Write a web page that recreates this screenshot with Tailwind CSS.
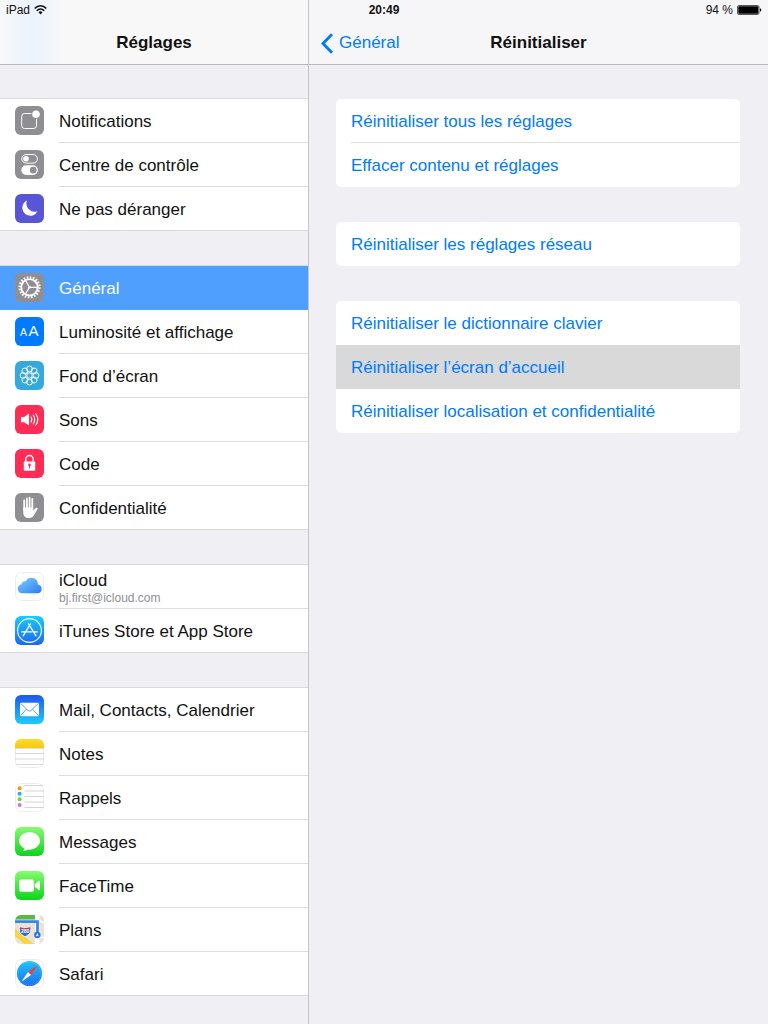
<!DOCTYPE html>
<html lang="fr">
<head>
    <meta charset="UTF-8">
    <meta name="viewport" content="width=device-width, initial-scale=1.0">
    <title>Réglages</title>
    <script src="https://cdn.jsdelivr.net/npm/@tailwindcss/browser@4"></script>
</head>
<body class="relative flex min-h-screen bg-[#efeff4] font-['Liberation_Sans',Arial,sans-serif] text-[17px] leading-5 text-[#111]">

    <!-- Status bar, over both columns -->
    <div class="absolute inset-x-0 top-0 grid h-5 grid-cols-3 items-center px-1.5 text-[12px] leading-4">
        <div class="flex items-center gap-1">
            <span>iPad</span>
            <svg class="h-[10px] w-[13px]" viewBox="0 0 13 10" fill="none" stroke="#111" stroke-width="1.5">
                <path d="M.7 3.600C4-.2 9-.2 12.300 3.600"/>
                <path d="M2.700 5.700c2.200-2.400 5.400-2.400 7.600 0"/>
                <path d="M4.500 7.200c1.200-1.200 2.800-1.200 4 0L6.500 9.500z" fill="#111" stroke="none"/>
            </svg>
        </div>
        <span class="text-center font-bold">20:49</span>
        <div class="flex items-center justify-end gap-1">
            <span>94 %</span>
            <svg class="h-[10px] w-[25px]" viewBox="0 0 25 10">
                <rect x=".5" y=".5" width="21.500" height="9" rx="1.500" fill="none" stroke="#111" stroke-width=".7"/>
                <rect x="1.300" y="1.300" width="20" height="7.400" rx=".8"/>
                <path d="M23 3.300c1.800.5 1.800 2.900 0 3.400z"/>
            </svg>
        </div>
    </div>

    <!-- Sidebar -->
    <aside class="w-[308px] shrink-0">
        <header class="h-[65px] border-b border-[#b8b8bd] bg-[#f8f8f8] bg-linear-to-r from-[#f8f8f8] via-[#ebf3fd] via-10% to-[#f8f8f8] to-22% pt-[33px]">
            <h1 class="text-center font-bold">Réglages</h1>
        </header>

        <nav class="flex flex-col gap-[34px] pt-[33px]">
            <ul class="border-t border-[#dadade] bg-white">
                <li class="h-11">
                    <a href="#" class="flex h-full items-center gap-[15px] pl-[15px]">
                        <svg class="mb-px size-[29px] shrink-0 rounded-md" viewBox="0 0 29 29">
                            <rect width="29" height="29" fill="#8e8e93"/>
                            <rect x="6.700" y="7.500" width="14.800" height="15" rx="2.800" fill="none" stroke="#fff" stroke-width="1"/>
                            <circle cx="21" cy="8.300" r="4.600" fill="#8e8e93"/>
                            <circle cx="21" cy="8.300" r="3.800" fill="#fff"/>
                        </svg>
                        <span class="flex h-full flex-1 items-center border-b border-[#dcdcdf] pt-0.5">Notifications</span>
                    </a>
                </li>
                <li class="h-11">
                    <a href="#" class="flex h-full items-center gap-[15px] pl-[15px]">
                        <svg class="mb-px size-[29px] shrink-0 rounded-md" viewBox="0 0 29 29">
                            <rect width="29" height="29" fill="#8e8e93"/>
                            <rect x="6.800" y="4.500" width="15.600" height="8.600" rx="4.300" fill="none" stroke="#fff" stroke-width="1"/>
                            <circle cx="11" cy="8.800" r="2.800" fill="#fff"/>
                            <rect x="6.300" y="15.300" width="16.600" height="9.600" rx="4.800" fill="#fff"/>
                            <circle cx="18.200" cy="20.100" r="3.400" fill="#8e8e93"/>
                        </svg>
                        <span class="flex h-full flex-1 items-center border-b border-[#dcdcdf] pt-0.5">Centre de contrôle</span>
                    </a>
                </li>
                <li class="h-11 border-b border-[#dadade]">
                    <a href="#" class="flex h-full items-center gap-[15px] pl-[15px]">
                        <svg class="size-[29px] shrink-0 rounded-md" viewBox="0 0 29 29">
                            <rect width="29" height="29" fill="#5856d6"/>
                            <path d="M12 6.500A8 8 0 1 0 22.500 17.300A8.300 8.300 0 0 1 12 6.500z" fill="#fff"/>
                        </svg>
                        <span class="pt-0.5">Ne pas déranger</span>
                    </a>
                </li>
            </ul>

            <ul class="border-t border-[#dadade] bg-white">
                <li class="h-11 bg-[#4e9fff] text-white">
                    <a href="#" aria-current="page" class="flex h-full items-center gap-[15px] pl-[15px]">
                        <svg class="mb-px size-[29px] shrink-0 rounded-md" viewBox="0 0 29 29" fill="none" stroke="#fff">
                            <rect width="29" height="29" fill="#8e8e93" stroke="none"/>
                            <circle cx="14.500" cy="14.300" r="10" stroke-width="2.200" stroke-dasharray="1.571 1.571"/>
                            <circle cx="14.500" cy="14.300" r="8.200" stroke-width="1.800"/>
                            <path d="M14.500 14.300h7.500M14.500 14.300l-3.800-6.500M14.500 14.300l-3.800 6.500" stroke-width="1.200"/>
                            <circle cx="14.500" cy="14.300" r="1.300" fill="#fff" stroke="none"/>
                        </svg>
                        <span class="pt-0.5">Général</span>
                    </a>
                </li>
                <li class="h-11">
                    <a href="#" class="flex h-full items-center gap-[15px] pl-[15px]">
                        <svg class="mb-px size-[29px] shrink-0 rounded-md" viewBox="0 0 29 29" fill="#fff">
                            <rect width="29" height="29" fill="#007aff"/>
                            <text x="5" y="18.700" font-size="10.500">A</text>
                            <text x="13.500" y="18.700" font-size="15">A</text>
                        </svg>
                        <span class="flex h-full flex-1 items-center border-b border-[#dcdcdf] pt-0.5">Luminosité et affichage</span>
                    </a>
                </li>
                <li class="h-11">
                    <a href="#" class="flex h-full items-center gap-[15px] pl-[15px]">
                        <svg class="mb-px size-[29px] shrink-0 rounded-md" viewBox="0 0 29 29" fill="none" stroke="#fff" stroke-width="1">
                            <rect width="29" height="29" fill="#34aadc" stroke="none"/>
                            <circle cx="14.500" cy="14.500" r="2.700"/>
                            <circle cx="14.500" cy="8" r="2.900"/>
                            <circle cx="19.100" cy="9.900" r="2.900"/>
                            <circle cx="21" cy="14.500" r="2.900"/>
                            <circle cx="19.100" cy="19.100" r="2.900"/>
                            <circle cx="14.500" cy="21" r="2.900"/>
                            <circle cx="9.900" cy="19.100" r="2.900"/>
                            <circle cx="8" cy="14.500" r="2.900"/>
                            <circle cx="9.900" cy="9.900" r="2.900"/>
                        </svg>
                        <span class="flex h-full flex-1 items-center border-b border-[#dcdcdf] pt-0.5">Fond d’écran</span>
                    </a>
                </li>
                <li class="h-11">
                    <a href="#" class="flex h-full items-center gap-[15px] pl-[15px]">
                        <svg class="mb-px size-[29px] shrink-0 rounded-md" viewBox="0 0 29 29" fill="none" stroke="#fff" stroke-width="1.100" stroke-linecap="round">
                            <rect width="29" height="29" fill="#ff2d55" stroke="none"/>
                            <path d="M6 12h3.200L14 8.500v12L9.200 17.200H6z" fill="#fff" stroke="none"/>
                            <path d="M16 12q1.700 2.500 0 5M18.300 10.300q2.900 4.200 0 8.400M20.700 8.700q4.200 5.800 0 11.600"/>
                        </svg>
                        <span class="flex h-full flex-1 items-center border-b border-[#dcdcdf] pt-0.5">Sons</span>
                    </a>
                </li>
                <li class="h-11">
                    <a href="#" class="flex h-full items-center gap-[15px] pl-[15px]">
                        <svg class="mb-px size-[29px] shrink-0 rounded-md" viewBox="0 0 29 29">
                            <rect width="29" height="29" fill="#ff2d55"/>
                            <path d="M10.700 13v-2.600a3.800 3.800 0 0 1 7.600 0V13" fill="none" stroke="#fff" stroke-width="1.500"/>
                            <rect x="8.800" y="12.500" width="11.400" height="9.300" rx=".8" fill="#fff"/>
                            <circle cx="14.500" cy="15.900" r="1.300" fill="#ff2d55"/>
                            <path d="M14 16h1v3.400h-1z" fill="#ff2d55"/>
                        </svg>
                        <span class="flex h-full flex-1 items-center border-b border-[#dcdcdf] pt-0.5">Code</span>
                    </a>
                </li>
                <li class="h-11 border-b border-[#dadade]">
                    <a href="#" class="flex h-full items-center gap-[15px] pl-[15px]">
                        <svg class="size-[29px] shrink-0 rounded-md" viewBox="0 0 29 29" fill="none" stroke="#fff" stroke-width="1.800" stroke-linecap="round">
                            <rect width="29" height="29" fill="#8e8e93" stroke="none"/>
                            <path d="M9.200 7.500V17M11.900 5.500V16M14.600 4.700V16M17.300 6V16"/>
                            <path d="M8.300 14.500h9.900v3l2.400-2.300c.9-.7 2.600-.3 2 .7l-3.700 6.400c-1.200 2-2.300 2.700-4.500 2.700h-1.200c-3 0-4.900-2.500-4.900-5.500z" fill="#fff" stroke="none"/>
                        </svg>
                        <span class="pt-0.5">Confidentialité</span>
                    </a>
                </li>
            </ul>

            <ul class="border-t border-[#dadade] bg-white">
                <li class="h-11">
                    <a href="#" class="flex h-full items-center gap-[15px] pl-[15px]">
                        <svg class="mb-px size-[29px] shrink-0 rounded-md" viewBox="0 0 29 29">
                            <defs>
                                <linearGradient id="cloud" x1="0" y1="0" x2="1" y2="1">
                                    <stop offset="0" stop-color="#7bd0fb"/>
                                    <stop offset="1" stop-color="#2a7bf5"/>
                                </linearGradient>
                            </defs>
                            <rect x=".5" y=".5" width="28" height="28" rx="6" fill="#fff" stroke="#ececee"/>
                            <path d="M7.400 21.300a4.600 4.600 0 0 1-.9-9.100 3.500 3.500 0 0 1 4.200-2.900 6.500 6.500 0 0 1 12.200 3.100 4.500 4.500 0 0 1-.3 8.900z" fill="url(#cloud)"/>
                        </svg>
                        <span class="flex h-full flex-1 flex-col justify-center border-b border-[#dcdcdf] pt-1">
                            <span class="leading-[18px]">iCloud</span>
                            <span class="text-[12px] leading-4 text-[#8e8e93]">bj.first@icloud.com</span>
                        </span>
                    </a>
                </li>
                <li class="h-11 border-b border-[#dadade]">
                    <a href="#" class="flex h-full items-center gap-[15px] pl-[15px]">
                        <svg class="size-[29px] shrink-0 rounded-md" viewBox="0 0 29 29" fill="none" stroke="#fff">
                            <defs>
                                <linearGradient id="store" x2="0" y2="1">
                                    <stop offset="0" stop-color="#1acdfb"/>
                                    <stop offset="1" stop-color="#1c66f0"/>
                                </linearGradient>
                            </defs>
                            <rect width="29" height="29" fill="url(#store)" stroke="none"/>
                            <circle cx="14.500" cy="14.500" r="11.900" stroke-width="1.100"/>
                            <path d="M13.500 7.800L21 19.800M15.300 8L8.200 19.800M6.800 15.900h10M19.300 15.900h2.900" stroke-width="1.300" stroke-linecap="round"/>
                        </svg>
                        <span class="pt-0.5">iTunes Store et App Store</span>
                    </a>
                </li>
            </ul>

            <ul class="border-t border-[#dadade] bg-white">
                <li class="h-11">
                    <a href="#" class="flex h-full items-center gap-[15px] pl-[15px]">
                        <svg class="mb-px size-[29px] shrink-0 rounded-md" viewBox="0 0 29 29">
                            <defs>
                                <linearGradient id="mail" x2="0" y2="1">
                                    <stop offset="0" stop-color="#1e56ee"/>
                                    <stop offset="1" stop-color="#1bcefb"/>
                                </linearGradient>
                            </defs>
                            <rect width="29" height="29" fill="url(#mail)"/>
                            <rect x="5" y="7.800" width="19" height="13.400" rx="1" fill="#fff"/>
                            <path d="M5.500 8.300l7.600 7.200q1.400 1.200 2.800 0l7.600-7.200M5.500 20.700l5.900-6.500M23.500 20.700l-5.900-6.500" fill="none" stroke="#2e8cf4" stroke-width=".8"/>
                        </svg>
                        <span class="flex h-full flex-1 items-center border-b border-[#dcdcdf] pt-0.5">Mail, Contacts, Calendrier</span>
                    </a>
                </li>
                <li class="h-11">
                    <a href="#" class="flex h-full items-center gap-[15px] pl-[15px]">
                        <svg class="mb-px size-[29px] shrink-0 rounded-md" viewBox="0 0 29 29">
                            <defs>
                                <linearGradient id="notes" x2="0" y2="1">
                                    <stop offset="0" stop-color="#fcdc2c"/>
                                    <stop offset="1" stop-color="#f9c70b"/>
                                </linearGradient>
                            </defs>
                            <rect x=".5" y=".5" width="28" height="28" rx="6" fill="#fff" stroke="#e4e4e6" stroke-width=".8"/>
                            <rect width="29" height="9" fill="url(#notes)"/>
                            <path d="M0 9.400h29M0 14.500h29M0 20h29M0 25.500h29" stroke="#cfcfd2" stroke-width=".8"/>
                        </svg>
                        <span class="flex h-full flex-1 items-center border-b border-[#dcdcdf] pt-0.5">Notes</span>
                    </a>
                </li>
                <li class="h-11">
                    <a href="#" class="flex h-full items-center gap-[15px] pl-[15px]">
                        <svg class="mb-px size-[29px] shrink-0 rounded-md" viewBox="0 0 29 29">
                            <rect x=".5" y=".5" width="28" height="28" rx="6" fill="#fff" stroke="#e8e8ea" stroke-width=".8"/>
                            <path d="M9.500 2.500H28M9.500 8H29M9.500 13.500H29M9.500 19H29M9.500 24.500H29" stroke="#cfcfd2" stroke-width=".9"/>
                            <circle cx="4.600" cy="5.200" r="2" fill="#ff9500"/>
                            <circle cx="4.600" cy="10.700" r="2" fill="#1badf8"/>
                            <circle cx="4.600" cy="16.300" r="2" fill="#63da38"/>
                            <circle cx="4.600" cy="22" r="2" fill="#cc73e1"/>
                        </svg>
                        <span class="flex h-full flex-1 items-center border-b border-[#dcdcdf] pt-0.5">Rappels</span>
                    </a>
                </li>
                <li class="h-11">
                    <a href="#" class="flex h-full items-center gap-[15px] pl-[15px]">
                        <svg class="mb-px size-[29px] shrink-0 rounded-md" viewBox="0 0 29 29">
                            <defs>
                                <linearGradient id="green" x2="0" y2="1">
                                    <stop offset="0" stop-color="#86fb6f"/>
                                    <stop offset="1" stop-color="#0dd41c"/>
                                </linearGradient>
                            </defs>
                            <rect width="29" height="29" fill="url(#green)"/>
                            <ellipse cx="14.500" cy="13.800" rx="10.600" ry="8.900" fill="#fff"/>
                            <path d="M9.300 20.500c.2 1.500-.5 2.700-1.600 3.500 2.200.1 4-.5 5.300-1.800z" fill="#fff"/>
                        </svg>
                        <span class="flex h-full flex-1 items-center border-b border-[#dcdcdf] pt-0.5">Messages</span>
                    </a>
                </li>
                <li class="h-11">
                    <a href="#" class="flex h-full items-center gap-[15px] pl-[15px]">
                        <svg class="mb-px size-[29px] shrink-0 rounded-md" viewBox="0 0 29 29">
                            <rect width="29" height="29" fill="url(#green)"/>
                            <rect x="4.300" y="8.400" width="14.500" height="12.300" rx="1.600" fill="#fff"/>
                            <path d="M19.700 13.300l4-3.300q1.300-.9 1.300.5v8q0 1.400-1.300.5l-4-3.300z" fill="#fff"/>
                        </svg>
                        <span class="flex h-full flex-1 items-center border-b border-[#dcdcdf] pt-0.5">FaceTime</span>
                    </a>
                </li>
                <li class="h-11">
                    <a href="#" class="flex h-full items-center gap-[15px] pl-[15px]">
                        <svg class="mb-px size-[29px] shrink-0 rounded-md" viewBox="0 0 29 29">
                            <rect width="29" height="29" fill="#e9e3d6"/>
                            <path d="M0 0h20v4.500H0z" fill="#58b947"/>
                            <path d="M25 0h4v5z" fill="#f7b9c5"/>
                            <path d="M20 0h4.500v29H20z" fill="#fff"/>
                            <path d="M24 5l5 3M24 22.500h5" stroke="#fff" stroke-width="1.500"/>
                            <path d="M0 14.500L18 29h-7.500L0 20.500z" fill="#fdd835"/>
                            <path d="M0 14.500L18 29M0 20.500L10.500 29" stroke="#f5b82e" stroke-width=".6"/>
                            <path d="M0 6.700h22.500v13" fill="none" stroke="#3a85e8" stroke-width="2.800"/>
                            <circle cx="22.300" cy="20" r="3.200" fill="#2a74dd"/>
                            <path d="M22.300 18l1.500 3.500-1.500-.8-1.500.8z" fill="#fff"/>
                            <path d="M5 12.200q5 1.500 10.200 0 2.600 6-5.100 9.600-7.700-3.600-5.100-9.600z" fill="#2870cf" stroke="#fff" stroke-width=".8"/>
                            <path d="M5 12.200q5 1.500 10.200 0l.4 1.900H4.600z" fill="#dc3b3b"/>
                            <text x="10.100" y="18.400" text-anchor="middle" font-size="5" font-weight="bold" fill="#fff">280</text>
                        </svg>
                        <span class="flex h-full flex-1 items-center border-b border-[#dcdcdf] pt-0.5">Plans</span>
                    </a>
                </li>
                <li class="h-11 border-b border-[#dadade]">
                    <a href="#" class="flex h-full items-center gap-[15px] pl-[15px]">
                        <svg class="size-[29px] shrink-0 rounded-md" viewBox="0 0 29 29">
                            <defs>
                                <linearGradient id="safari" x2="0" y2="1">
                                    <stop offset="0" stop-color="#1bc6fb"/>
                                    <stop offset="1" stop-color="#1d6ff0"/>
                                </linearGradient>
                            </defs>
                            <rect x=".5" y=".5" width="28" height="28" rx="6" fill="#fff" stroke="#e8e8ea" stroke-width=".8"/>
                            <circle cx="14.500" cy="14.500" r="12.600" fill="url(#safari)"/>
                            <circle cx="14.500" cy="14.500" r="11.200" fill="none" stroke="#fff" stroke-opacity=".5" stroke-width="1" stroke-dasharray=".4 1.900"/>
                            <path d="M22.700 6.300L16 16l-3-3z" fill="#fb3b30"/>
                            <path d="M6.300 22.700L13 13l3 3z" fill="#fff"/>
                        </svg>
                        <span class="pt-0.5">Safari</span>
                    </a>
                </li>
            </ul>
        </nav>
    </aside>

    <!-- Detail pane -->
    <main class="min-w-0 flex-1 border-l border-[#c4c4c9]">
        <header class="grid h-[65px] grid-cols-[1fr_auto_1fr] border-b border-[#b8b8bd] bg-[#f6f6f8] pt-[33px]">
            <a href="#" class="flex h-5 items-center gap-1.5 pl-3 text-[#007aff]">
                <svg class="h-[21px] w-3" viewBox="0 0 12 21" fill="none" stroke="#007aff" stroke-width="3">
                    <path d="M11 1.200L2 10.500l9 9.300"/>
                </svg>
                Général
            </a>
            <h2 class="font-bold">Réinitialiser</h2>
        </header>

        <div class="flex flex-col gap-[35px] pt-[34px] pr-7 pl-[27px] text-[#007aff]">
            <div class="overflow-hidden rounded-[5px] bg-white">
                <button type="button" class="flex h-11 w-full pl-[15px]">
                    <span class="flex h-full flex-1 items-center border-b border-[#dcdcdf] pt-0.5">Réinitialiser tous les réglages</span>
                </button>
                <button type="button" class="flex h-11 w-full items-center pt-0.5 pl-[15px]">Effacer contenu et réglages</button>
            </div>

            <div class="overflow-hidden rounded-[5px] bg-white">
                <button type="button" class="flex h-11 w-full items-center pt-0.5 pl-[15px]">Réinitialiser les réglages réseau</button>
            </div>

            <div class="overflow-hidden rounded-[5px] bg-white">
                <button type="button" class="flex h-11 w-full items-center pt-0.5 pl-[15px]">Réinitialiser le dictionnaire clavier</button>
                <button type="button" class="flex h-11 w-full items-center bg-[#d9d9d9] pt-0.5 pl-[15px]">Réinitialiser l’écran d’accueil</button>
                <button type="button" class="flex h-11 w-full items-center pt-0.5 pl-[15px]">Réinitialiser localisation et confidentialité</button>
            </div>
        </div>
    </main>
</body>
</html>
